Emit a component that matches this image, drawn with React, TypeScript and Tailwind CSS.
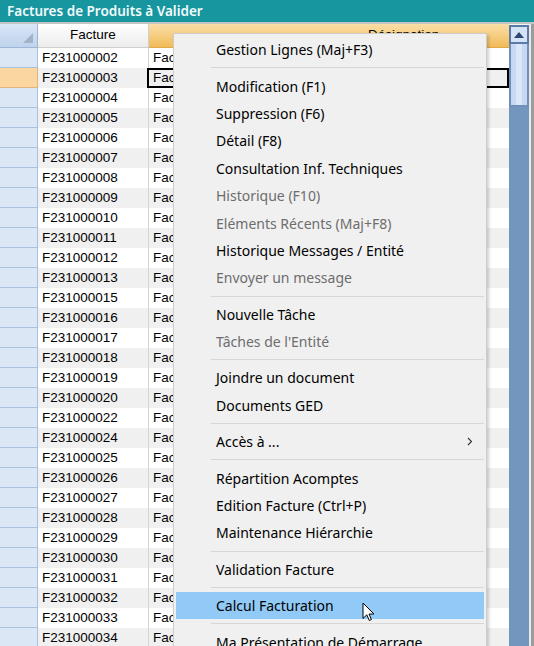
import React from 'react';

const factures = [
  '02', '03', '04', '05', '06', '07', '08', '09', '10', '11', '12', '13', '15', '16', '17',
  '18', '19', '20', '22', '24', '25', '26', '27', '28', '29', '30', '31', '32', '33', '34',
].map((n) => 'F2310000' + n);

type Item = { label: string; disabled?: boolean; sub?: boolean; active?: boolean } | 'sep';

const menu: Item[] = [
  { label: 'Gestion Lignes (Maj+F3)' },
  'sep',
  { label: 'Modification (F1)' },
  { label: 'Suppression (F6)' },
  { label: 'Détail (F8)' },
  { label: 'Consultation Inf. Techniques' },
  { label: 'Historique (F10)', disabled: true },
  { label: 'Eléments Récents (Maj+F8)', disabled: true },
  { label: 'Historique Messages / Entité' },
  { label: 'Envoyer un message', disabled: true },
  'sep',
  { label: 'Nouvelle Tâche' },
  { label: "Tâches de l'Entité", disabled: true },
  'sep',
  { label: 'Joindre un document' },
  { label: 'Documents GED' },
  'sep',
  { label: 'Accès à ...', sub: true },
  'sep',
  { label: 'Répartition Acomptes' },
  { label: 'Edition Facture (Ctrl+P)' },
  { label: 'Maintenance Hiérarchie' },
  'sep',
  { label: 'Validation Facture' },
  'sep',
  { label: 'Calcul Facturation', active: true },
  'sep',
  { label: 'Ma Présentation de Démarrage' },
];

function ContextMenu() {
  return (
    <div className="absolute left-[173px] top-[33px] w-[314px] bg-[#f0f0f0] border border-[#cccccc] px-[2px] py-[2px] shadow-[2px_2px_3px_rgba(0,0,0,0.18)] font-['Noto_Sans',sans-serif] text-[14px]">
      {menu.map((it, i) =>
        it === 'sep' ? (
          <div key={i} className="h-[9px] flex items-center pl-[35px]">
            <div className="h-px w-full bg-[#d7d7d7]" />
          </div>
        ) : (
          <div
            key={i}
            className={
              'h-[27.4px] flex items-center pl-[40px] pr-[12px] ' +
              (it.active ? 'bg-[#91c9f7] ' : '') +
              (it.disabled ? 'text-[#6d6d6d]' : 'text-black')
            }
          >
            <span className="flex-1 whitespace-nowrap">{it.label}</span>
            {it.sub && (
              <svg width="6" height="9" viewBox="0 0 6 9" className="mr-[-1px]">
                <path d="M1 1 L4.5 4.5 L1 8" fill="none" stroke="#333" strokeWidth="1.1" />
              </svg>
            )}
          </div>
        )
      )}
    </div>
  );
}

export default function App() {
  return (
    <div className="w-[534px] h-[646px] overflow-hidden bg-white relative">
      {/* barre de titre */}
      <div className="h-[22px] bg-[#1896a0] text-[#f2fafa] font-semibold text-[13.5px] pl-[7px] flex items-center font-['Noto_Sans',sans-serif]">
        Factures de Produits à Valider
      </div>
      <div className="h-[2px] bg-[#c4c4c4]" />

      <div className="flex font-['Liberation_Sans',Arial,sans-serif] text-[13.5px] text-black">
        {/* grille */}
        <div className="w-[509px]">
          <div className="h-[24px] flex">
            <div className="w-[38px] relative bg-gradient-to-b from-[#d9e6f6] to-[#bfd3ec] border-r border-b border-[#9db5d6]">
              <svg width="10" height="10" viewBox="0 0 10 10" className="absolute left-[23px] top-[9px]">
                <path d="M10 0 L10 10 L0 10 Z" fill="#a3b2c4" />
              </svg>
            </div>
            <div className="w-[111px] bg-gradient-to-b from-white to-[#ececec] border-r border-b border-[#cfcfcf] flex items-center justify-center">
              Facture
            </div>
            <div className="flex-1 bg-gradient-to-b from-[#fadea6] to-[#f1bc57] border-b border-[#e0a84a] flex items-center pl-[219px] whitespace-nowrap overflow-hidden">
              Désignation
            </div>
          </div>
          {factures.map((f, i) => (
            <div key={f} className={'h-[20px] flex ' + (i % 2 ? 'bg-[#f0f0f0]' : 'bg-white')}>
              <div
                className={
                  'w-[38px] border-r border-b ' +
                  (i === 1 ? 'bg-[#fbd6a0] border-[#e0b47a]' : 'bg-[#dce7f5] border-[#a9c0de]')
                }
              />
              <div className="w-[111px] border-r border-[#d4d4d4] pl-[4px] leading-[20px]">{f}</div>
              {/* la désignation est masquée par le menu contextuel */}
              {i === 1 ? (
                <div className="flex-1 -ml-[2px] border-2 border-black pl-[4px] leading-[16px]">
                  <div className="w-[20px] overflow-hidden whitespace-nowrap">Facture</div>
                </div>
              ) : (
                <div className="flex-1 pl-[4px] leading-[20px]">
                  <div className="w-[20px] overflow-hidden whitespace-nowrap">Facture</div>
                </div>
              )}
            </div>
          ))}
        </div>

        {/* barre de défilement */}
        <div className="w-[20px] flex flex-col bg-[#7396be] h-[622px]">
          <div className="h-[1px] bg-[#f4f4f4]" />
          <div className="h-[19px] bg-[#d5e3f6] border-2 border-[#5b7ba6] flex items-center justify-center">
            <svg width="10" height="6" viewBox="0 0 10 6">
              <path d="M0 6 L5 0 L10 6 Z" fill="#2b4870" />
            </svg>
          </div>
          <div className="h-[63px] border-x-2 border-b-2 border-[#6f8fba] bg-[#c6d8f2] flex justify-center">
            <div className="w-[6px] bg-[#dbe7f8]" />
          </div>
        </div>
        <div className="w-[2px] bg-[#e8e8e8] h-[622px]" />
        <div className="w-[3px] bg-[#9c9c9c] h-[622px]" />
      </div>

      <ContextMenu />

      {/* curseur */}
      <svg width="13" height="20" viewBox="0 0 13 20" className="absolute left-[362px] top-[602px]">
        <path
          d="M1 1 L1 16.5 L4.8 12.8 L7.3 18.5 L9.4 17.6 L7 12 L12 12 Z"
          fill="white"
          stroke="black"
          strokeWidth="1"
          strokeLinejoin="miter"
        />
      </svg>
    </div>
  );
}
